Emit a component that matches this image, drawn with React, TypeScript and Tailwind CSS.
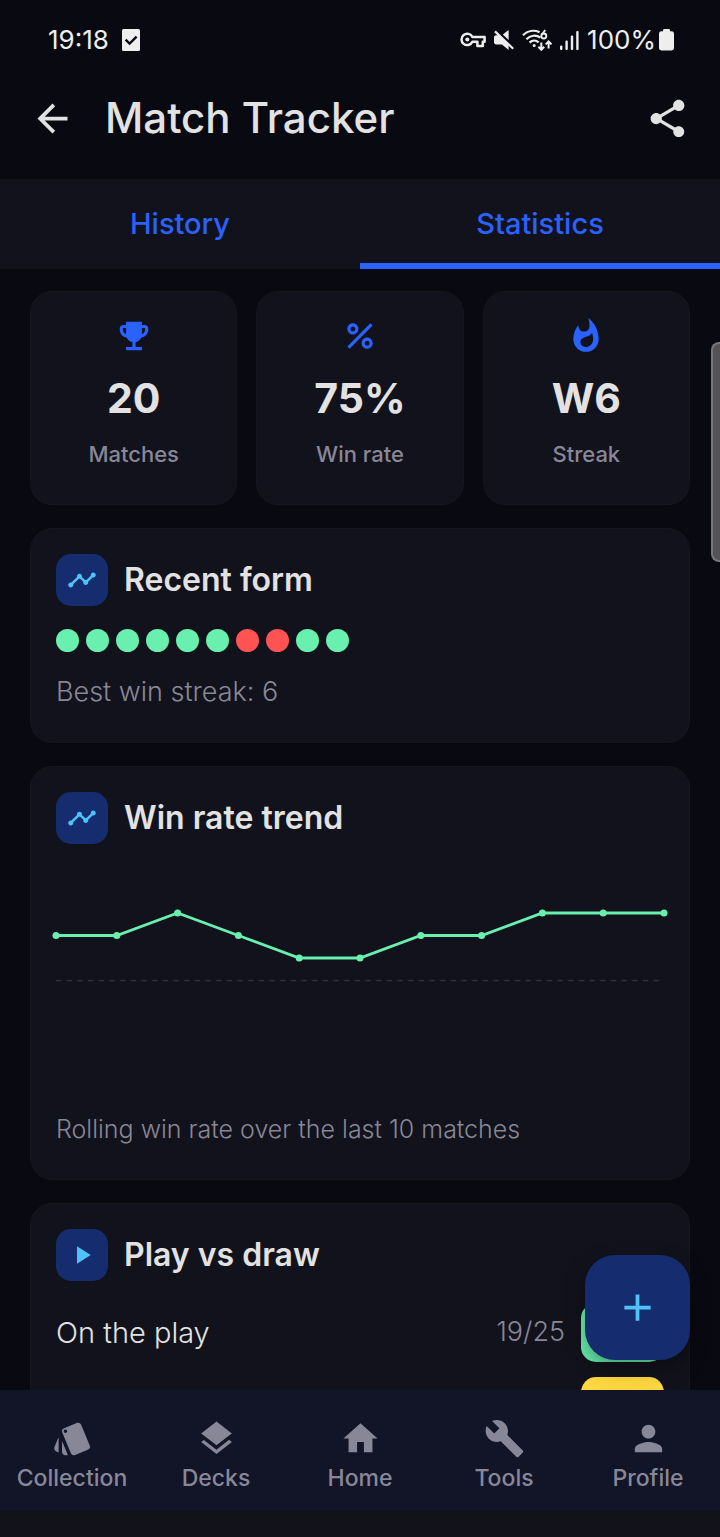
import { useState, type ReactNode } from "react";
import type { IconType } from "react-icons";
import {
  MdAdd,
  MdArrowBack,
  MdBuild,
  MdEmojiEvents,
  MdHome,
  MdLayers,
  MdPercent,
  MdPerson,
  MdPlayArrow,
  MdShare,
  MdStyle,
  MdTimeline,
  MdWhatshot,
} from "react-icons/md";

const TABS = ["History", "Statistics"];

const STATS: { icon: IconType; value: string; label: string }[] = [
  { icon: MdEmojiEvents, value: "20", label: "Matches" },
  { icon: MdPercent, value: "75%", label: "Win rate" },
  { icon: MdWhatshot, value: "W6", label: "Streak" },
];

const RECENT_FORM = ["W", "W", "W", "W", "W", "W", "L", "L", "W", "W"];

const WIN_RATES = [70, 70, 80, 70, 60, 60, 70, 70, 80, 80, 80];

const NAV_ITEMS: { icon: IconType; label: string }[] = [
  { icon: MdStyle, label: "Collection" },
  { icon: MdLayers, label: "Decks" },
  { icon: MdHome, label: "Home" },
  { icon: MdBuild, label: "Tools" },
  { icon: MdPerson, label: "Profile" },
];

function StatusBar() {
  return (
    <div className="flex h-[79px] shrink-0 items-center justify-between pl-12 pr-[46px] text-[26px] text-[#eeeeee]">
      <div className="flex items-center gap-[13px]">
        <span>19:18</span>
        <svg width="18" height="22" viewBox="0 0 18 22" aria-hidden="true">
          <rect width="18" height="22" rx="1.5" fill="currentColor" />
          <path d="M3.6 10.6l4 4L14.6 7.6" fill="none" stroke="#0a0a12" strokeWidth="2.4" />
        </svg>
      </div>
      <div className="flex items-center gap-2">
        <svg width="26" height="16" viewBox="0 0 26 16" fill="none" stroke="currentColor" aria-hidden="true">
          <path
            d="M12.4 5h12.200v4.800h-1.800v4.200h-5.400v-4.200h-5a5.700 5.700 0 1 1 0-4.800z"
            strokeWidth="2.5"
            strokeLinejoin="round"
          />
          <circle cx="7.3" cy="7.6" r="2" fill="currentColor" stroke="none" />
        </svg>
        <svg width="20" height="20" viewBox="0 0 20 20" fill="currentColor" aria-hidden="true">
          <path d="M8.800 4.600L14.600 0v10z" />
          <path d="M0 6.600l1.600-1.400h3.600l9.400 9.200V20l-6.600-5.600H1.600L0 13z" />
          <path d="M1 1.400l18.200 17.400" fill="none" stroke="currentColor" strokeWidth="2.2" />
        </svg>
        <svg width="30" height="22" viewBox="0 0 30 22" fill="none" stroke="currentColor" aria-hidden="true">
          <path d="M1 6.2C5.400 1.900 12 .8 17.600 3.200" strokeWidth="2.2" />
          <path d="M4.400 10.200C8.400 6.200 14 5.600 18.400 8.600" strokeWidth="2.2" />
          <path d="M7.600 13.600c2.700-2.700 6.300-2.700 9-.2" strokeWidth="2.2" />
          <circle cx="12.200" cy="16.400" r="1.500" fill="currentColor" stroke="none" />
          <path d="M23.200 1l-3.400 4.800" strokeWidth="1.900" />
          <circle cx="21.800" cy="7" r="2.500" strokeWidth="1.900" />
          <path
            d="M19.300 13.600v7M16.400 17.800l2.900 3 2.900-3M26.600 19.400v-6.800M23.700 15.400l2.900-2.900 2.900 2.900"
            strokeWidth="2"
          />
        </svg>
        <svg width="19" height="20" viewBox="0 0 19 20" fill="currentColor" aria-hidden="true">
          <rect x="0" y="15.500" width="2.400" height="4.500" rx="1" />
          <rect x="5.400" y="10.500" width="2.400" height="9.500" rx="1" />
          <rect x="10.800" y="5.500" width="2.400" height="14.500" rx="1" />
          <rect x="16.200" y="1" width="2.400" height="19" rx="1" />
        </svg>
        <div className="flex items-center gap-[3px]">
          <span>100%</span>
          <svg width="15" height="22" viewBox="0 0 15 22" fill="currentColor" aria-hidden="true">
            <rect x="4" width="7" height="5" rx="1.200" />
            <rect y="2.200" width="15" height="19.300" rx="2.400" />
          </svg>
        </div>
      </div>
    </div>
  );
}

function Card({ children, className = "" }: { children: ReactNode; className?: string }) {
  return (
    <section className={`rounded-[22px] border border-[#16161f] bg-[#12121c] ${className}`}>
      {children}
    </section>
  );
}

function CardTitle({ icon: Icon, children }: { icon: IconType; children: ReactNode }) {
  return (
    <div className="flex items-center gap-4">
      <div className="flex size-[52px] items-center justify-center rounded-[15px] bg-[#152d6e]">
        <Icon className="size-[30px] text-[#4fc3f7]" />
      </div>
      <h2 className="text-[32px] leading-[40px] font-semibold text-[#e2e2e2]">{children}</h2>
    </div>
  );
}

function TrendChart() {
  const step = 608 / (WIN_RATES.length - 1);
  const points = WIN_RATES.map((rate, i) => [i * step, 225 - rate * 2.25]);

  return (
    <svg
      viewBox="0 0 608 225"
      className="mt-6 w-full overflow-visible"
      role="img"
      aria-label="Win rate trend"
    >
      <line x1="0" y1="112.5" x2="604" y2="112.5" stroke="#30303a" strokeWidth="1.6" strokeDasharray="5.4 5.27" />
      <polyline points={points.map((p) => p.join(",")).join(" ")} fill="none" stroke="#69f0ae" strokeWidth="2.8" />
      {points.map(([x, y]) => (
        <circle key={x} cx={x} cy={y} r="3.5" fill="#69f0ae" />
      ))}
    </svg>
  );
}

export default function App() {
  const [activeTab, setActiveTab] = useState("Statistics");

  return (
    <div className="relative flex h-screen flex-col overflow-hidden bg-[#090911] font-['Inter','Noto_Sans',sans-serif] text-[#e2e2e2]">
      <StatusBar />

      <header className="flex h-[100px] shrink-0 items-center px-[30px] pb-[22px]">
        <button type="button" aria-label="Back">
          <MdArrowBack className="size-[45px]" />
        </button>
        <h1 className="flex-1 pl-[30px] text-[42px] leading-[52px] font-medium">Match Tracker</h1>
        <button type="button" aria-label="Share">
          <MdShare className="size-[45px]" />
        </button>
      </header>

      <div role="tablist" className="flex h-[90px] shrink-0 bg-[#12121c]">
        {TABS.map((tab) => (
          <button
            key={tab}
            type="button"
            role="tab"
            aria-selected={activeTab === tab}
            onClick={() => setActiveTab(tab)}
            className={`flex-1 border-y-6 border-t-transparent text-[29px] font-medium text-[#2962ff] ${
              activeTab === tab ? "border-b-[#2962ff]" : "border-b-transparent"
            }`}
          >
            {tab}
          </button>
        ))}
      </div>

      <div className="relative min-h-0 flex-1">
        <main className="flex h-full flex-col gap-[23px] overflow-y-auto px-[30px] pt-[22px] [scrollbar-width:none] *:shrink-0">
          <div className="grid grid-cols-3 gap-[19px]">
            {STATS.map(({ icon: Icon, value, label }) => (
              <Card key={label} className="flex flex-col items-center pt-[25px] pb-8">
                <Icon className="size-[38px] text-[#2962ff]" />
                <p className="mt-[18px] text-[41px] leading-[50px] font-bold">{value}</p>
                <p className="mt-[13px] text-[22px] leading-9 font-medium text-[#888797]">{label}</p>
              </Card>
            ))}
          </div>

          <Card className="px-[25px] pt-[25px] pb-8">
            <CardTitle icon={MdTimeline}>Recent form</CardTitle>
            <div className="mt-[23px] flex gap-[7px]">
              {RECENT_FORM.map((result, i) => (
                <span
                  key={i}
                  className={`size-[23px] rounded-full ${result === "W" ? "bg-[#69f0ae]" : "bg-[#ff5252]"}`}
                />
              ))}
            </div>
            <p className="mt-[22px] text-[27px] leading-9 font-light text-[#888797]">Best win streak: 6</p>
          </Card>

          <Card className="px-[25px] pt-[25px] pb-8">
            <CardTitle icon={MdTimeline}>Win rate trend</CardTitle>
            <TrendChart />
            <p className="mt-[18px] text-[25px] leading-9 font-light text-[#888797]">
              Rolling win rate over the last 10 matches
            </p>
          </Card>

          <Card className="px-[25px] pt-[25px] pb-8">
            <CardTitle icon={MdPlayArrow}>Play vs draw</CardTitle>
            <div className="mt-[22px] flex items-center gap-4">
              <span className="flex-1 text-[29px] font-light">On the play</span>
              <span className="text-[27px] font-light text-[#888797]">19/25</span>
              <span className="h-[59px] w-[83px] rounded-[15px] bg-[#69f0ae]" />
            </div>
            <div className="mt-[15px] flex justify-end">
              <span className="h-[59px] w-[83px] rounded-[15px] bg-[#ffd740]" />
            </div>
          </Card>
        </main>

        <button
          type="button"
          aria-label="Add match"
          className="absolute right-[30px] bottom-[30px] flex size-[105px] items-center justify-center rounded-[30px] bg-[#152d6e] text-[#4fc3f7] shadow-[0_8px_20px_rgba(0,0,0,0.35)]"
        >
          <MdAdd className="size-[45px]" />
        </button>
      </div>

      <nav className="grid h-[121px] shrink-0 grid-cols-5 bg-[#121428] text-[#888797]">
        {NAV_ITEMS.map(({ icon: Icon, label }) => (
          <a key={label} href="#" className="flex flex-col items-center gap-[5px] pt-7">
            <Icon className="size-[41px]" />
            <span className="text-[23px] leading-7 font-medium">{label}</span>
          </a>
        ))}
      </nav>
      <div className="h-[26px] shrink-0 bg-[#12121a]" />

      {/* edge panel handle */}
      <div className="absolute top-[342px] right-0 h-[220px] w-[9px] rounded-l-lg border-2 border-r-0 border-[#77777a] bg-[#545458]" />
    </div>
  );
}
